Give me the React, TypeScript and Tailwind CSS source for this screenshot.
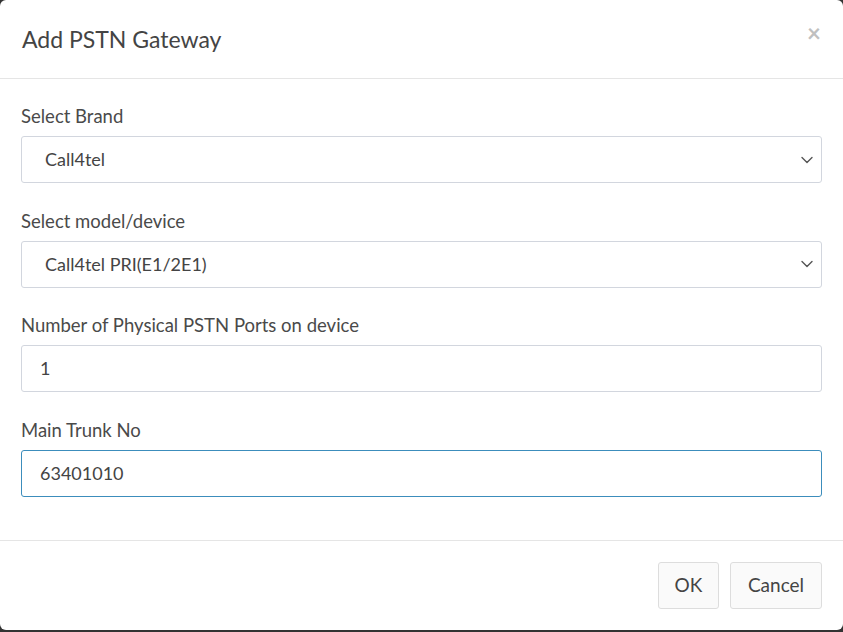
import React from "react";

const Chevron = () => (
  <svg width="12" height="8" viewBox="0 0 12 8" fill="none" className="shrink-0">
    <path d="M1 1.5 L6 6.5 L11 1.5" stroke="#555" strokeWidth="1.4" strokeLinecap="round" strokeLinejoin="round" />
  </svg>
);

function Field({ label, children }: { label: string; children: React.ReactNode }) {
  return (
    <div className="mb-[24.67px]">
      <div className="text-[18.5px] leading-[26px] text-[#4a4a4a] mb-[7px]">{label}</div>
      {children}
    </div>
  );
}

function SelectBox({ value }: { value: string }) {
  return (
    <div className="h-[47px] border border-[#d2d6de] rounded-[3px] bg-white flex items-center pl-[23px] pr-[8px]">
      <span className="flex-1 text-[18px] text-[#444]">{value}</span>
      <Chevron />
    </div>
  );
}

function InputBox({ value, focus }: { value: string; focus?: boolean }) {
  return (
    <div
      className={
        focus
          ? "h-[47px] border border-[#3c8dbc] rounded-[3px] bg-white flex items-center pl-[18px]"
          : "h-[47px] border border-[#d2d6de] rounded-[3px] bg-white flex items-center pl-[18px]"
      }
    >
      <span className="text-[18px] text-[#444]">{value}</span>
    </div>
  );
}

export default function App() {
  return (
    <div className="w-[843px] h-[632px] bg-[#333] overflow-hidden" style={{ fontFamily: "Lato, 'Open Sans', sans-serif" }}>
      <div className="w-[843px] h-[630px] bg-white rounded-[6px] flex flex-col">
        <div className="h-[79px] border-b border-[#e5e5e5] flex items-center justify-between pl-[22px] pr-[22px]">
          <h4 className="text-[23px] text-[#444] leading-none">Add PSTN Gateway</h4>
          <span className="text-[24px] text-[#c0c0c0] font-bold leading-none -mt-[12px]">×</span>
        </div>
        <div className="px-[21px] pt-[24px] pb-[18px]">
          <Field label="Select Brand">
            <SelectBox value="Call4tel" />
          </Field>
          <Field label="Select model/device">
            <SelectBox value="Call4tel PRI(E1/2E1)" />
          </Field>
          <Field label="Number of Physical PSTN Ports on device">
            <InputBox value="1" />
          </Field>
          <Field label="Main Trunk No">
            <InputBox value="63401010" focus />
          </Field>
        </div>
        <div className="border-t border-[#e5e5e5] flex justify-end gap-[11px] pt-[21px] pr-[21px]">
          <button className="h-[47px] w-[61px] border border-[#ddd] rounded-[3px] bg-[#fafafa] text-[19px] text-[#444]">OK</button>
          <button className="h-[47px] w-[92px] border border-[#ddd] rounded-[3px] bg-[#fafafa] text-[19px] text-[#444]">Cancel</button>
        </div>
      </div>
    </div>
  );
}
